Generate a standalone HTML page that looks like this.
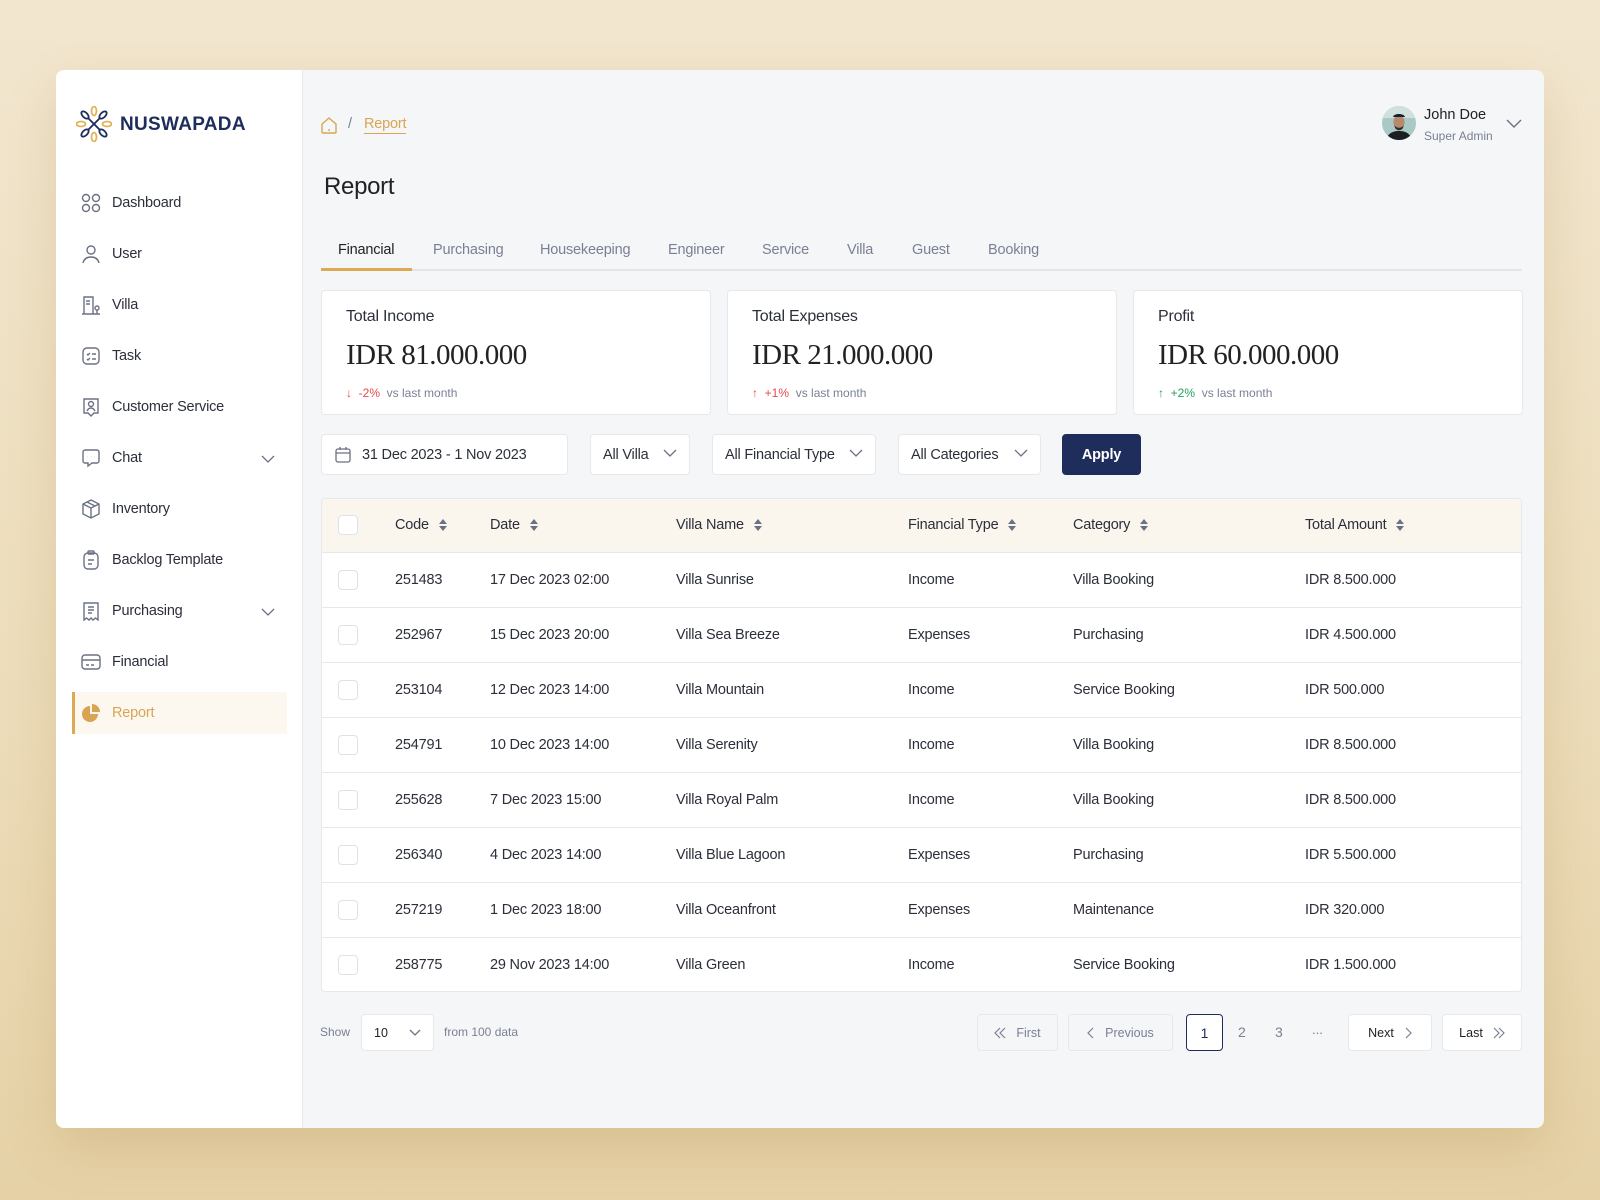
<!DOCTYPE html>
<html><head><meta charset="utf-8"><style>
*{box-sizing:border-box;margin:0;padding:0}
body{width:1600px;height:1200px;overflow:hidden;background:linear-gradient(180deg,#f2e6cf 0%,#ecdcb9 60%,#e6d1a6 100%);font-family:"Liberation Sans",sans-serif;color:#2b2f3a;position:relative}
.a{position:absolute}
.card{left:56px;top:70px;width:1488px;height:1058px;background:#f5f6f8;border-radius:8px;overflow:hidden;box-shadow:0 20px 50px rgba(150,110,40,.18)}
.side{left:0;top:0;width:247px;height:1058px;background:#fff;border-right:1px solid #e7e8ec}
.nav{position:absolute;left:25px;font-size:14.5px;color:#2b2f3a;display:flex;align-items:center;letter-spacing:-.2px}
.nav svg{margin-right:11px}
.t{font-size:14.5px;letter-spacing:-.2px;white-space:nowrap}
.tab{position:absolute;top:172px;font-size:14.5px;color:#7a8093;letter-spacing:-.2px}
.stat{position:absolute;top:220px;width:390px;height:125px;background:#fff;border:1px solid #e6e8ec;border-radius:4px}
.stat .h{position:absolute;left:24px;top:17px;font-size:16px;color:#2b2f3a;letter-spacing:-.2px}
.stat .v{position:absolute;left:24px;top:48px;font-family:"Liberation Serif",serif;font-size:29px;color:#222;letter-spacing:-.5px}
.stat .c{position:absolute;left:24px;top:95px;font-size:12px;color:#7a8093}
.fl{position:absolute;top:364px;height:41px;background:#fff;border:1px solid #e6e8ec;border-radius:4px;font-size:14.5px;display:flex;align-items:center;padding-left:12px;letter-spacing:-.2px}
.chev{position:absolute;right:12px;top:14px}
.tbl{position:absolute;left:265px;top:428px;width:1201px;height:494px;background:#fff;border:1px solid #e6e8ec;border-radius:4px;overflow:hidden}
.row{position:absolute;left:0;width:100%;height:55px;border-top:1px solid #e6e8ec}
.cb{position:absolute;left:16px;top:17px;width:20px;height:20px;border:1px solid #dfe2e8;border-radius:4px;background:#fff}
.row .t{position:absolute;top:19px}
.hd{display:flex;align-items:center;gap:9px}
.pb{position:absolute;top:944px;height:37px;border:1px solid #e6e8ec;border-radius:4px;font-size:12.5px;display:flex;align-items:center;justify-content:center;gap:10px}
</style></head><body>
<svg width="0" height="0" style="position:absolute"><defs><g id="srt"><path d="M1 6L5 1 9 6z M1 8l4 5 4-5z" fill="#6b7185"/></g></defs></svg>
<div class="a card">
 <div class="a side">
  <svg class="a" style="left:20px;top:36px" width="36" height="36" viewBox="0 0 36 36"><g fill="none" stroke-width="1.8"><g stroke="#e2b455"><ellipse cx="18" cy="5" rx="2.5" ry="4.5"/><ellipse cx="18" cy="31" rx="2.5" ry="4.5"/><ellipse cx="5" cy="18" rx="4.5" ry="2.5"/><ellipse cx="31" cy="18" rx="4.5" ry="2.5"/></g><g stroke="#1f2d5c"><ellipse cx="9" cy="9" rx="2.5" ry="4.5" transform="rotate(-45 9 9)"/><ellipse cx="27" cy="9" rx="2.5" ry="4.5" transform="rotate(45 27 9)"/><ellipse cx="9" cy="27" rx="2.5" ry="4.5" transform="rotate(45 9 27)"/><ellipse cx="27" cy="27" rx="2.5" ry="4.5" transform="rotate(-45 27 27)"/><path d="M12 12L24 24M24 12L12 24"/></g></g></svg>
  <div class="a" style="left:64px;top:44px;font-size:19px;font-weight:bold;color:#1f2d5c;letter-spacing:.3px">NUSWAPADA</div>
  <div class="nav" style="top:123px"><svg width="20" height="20" viewBox="0 0 20 20" fill="none" stroke="#6b7185" stroke-width="1.4"><circle cx="5" cy="5" r="3.5"/><circle cx="15" cy="5" r="3.5"/><circle cx="5" cy="15" r="3.5"/><circle cx="15" cy="15" r="3.5"/></svg>Dashboard</div>
  <div class="nav" style="top:174px"><svg width="20" height="20" viewBox="0 0 20 20" fill="none" stroke="#6b7185" stroke-width="1.4"><circle cx="10" cy="6" r="4"/><path d="M2 19c1-4 4-6 8-6s7 2 8 6"/></svg>User</div>
  <div class="nav" style="top:225px"><svg width="20" height="20" viewBox="0 0 20 20" fill="none" stroke="#6b7185" stroke-width="1.4"><path d="M1 19h18M3 19V2h9v17M5 6h4M5 9h4M16 19v-4"/><circle cx="16" cy="13" r="2"/></svg>Villa</div>
  <div class="nav" style="top:276px"><svg width="20" height="20" viewBox="0 0 20 20" fill="none" stroke="#6b7185" stroke-width="1.4"><rect x="2" y="2" width="16" height="16" rx="4"/><path d="M6 8l1 1 2-2M6 13l1 1 2-2M11 8h4M11 13h4"/></svg>Task</div>
  <div class="nav" style="top:327px"><svg width="20" height="20" viewBox="0 0 20 20" fill="none" stroke="#6b7185" stroke-width="1.4"><path d="M3 2h14v14h-4l-3 3-3-3H3z"/><circle cx="10" cy="7" r="2.5"/><path d="M6 14c1-2 2-3 4-3s3 1 4 3"/></svg>Customer Service</div>
  <div class="nav" style="top:378px"><svg width="20" height="20" viewBox="0 0 20 20" fill="none" stroke="#6b7185" stroke-width="1.4"><path d="M2 4a2 2 0 012-2h12a2 2 0 012 2v9a2 2 0 01-2 2h-5l-4 3v-3H4a2 2 0 01-2-2z"/><path d="M6.5 9h.1M10 9h.1M13.5 9h.1" stroke-width="2"/></svg>Chat</div>
  <svg class="a" style="left:205px;top:385px" width="14" height="8" viewBox="0 0 14 8"><path d="M1 1l6 6 6-6" fill="none" stroke="#6b7185" stroke-width="1.3"/></svg>
  <div class="nav" style="top:429px"><svg width="20" height="20" viewBox="0 0 20 20" fill="none" stroke="#6b7185" stroke-width="1.4"><path d="M10 1l8 4v10l-8 4-8-4V5z"/><path d="M2 5l8 4 8-4M10 9v10M6 3l8 4"/></svg>Inventory</div>
  <div class="nav" style="top:480px"><svg width="20" height="20" viewBox="0 0 20 20" fill="none" stroke="#6b7185" stroke-width="1.4"><rect x="3" y="3" width="14" height="16" rx="4"/><rect x="7" y="1" width="6" height="3" rx="1"/><path d="M7 10h6M7 14h4"/></svg>Backlog Template</div>
  <div class="nav" style="top:531px"><svg width="20" height="20" viewBox="0 0 20 20" fill="none" stroke="#6b7185" stroke-width="1.4"><path d="M3 2h14v17l-2.5-2-2.5 2-2-2-2 2-2.5-2L3 19z"/><path d="M7 6h6M7 9h6M7 12h4"/></svg>Purchasing</div>
  <svg class="a" style="left:205px;top:538px" width="14" height="8" viewBox="0 0 14 8"><path d="M1 1l6 6 6-6" fill="none" stroke="#6b7185" stroke-width="1.3"/></svg>
  <div class="nav" style="top:582px"><svg width="20" height="20" viewBox="0 0 20 20" fill="none" stroke="#6b7185" stroke-width="1.4"><rect x="1" y="3" width="18" height="14" rx="3"/><path d="M1 8h18M5 13h3M10 13h3"/></svg>Financial</div>
  <div class="a" style="left:16px;top:622px;width:215px;height:42px;background:#fcf8f0;border-left:3px solid #dcaa55"></div>
  <div class="nav" style="top:633px;color:#d9a552"><svg width="20" height="20" viewBox="0 0 20 20"><path d="M9 3a8 8 0 108 8H9z" fill="#d9a552"/><path d="M11 1a8 8 0 018 8h-8z" fill="#d9a552"/></svg>Report</div>
 </div>
 <svg class="a" style="left:264px;top:46px" width="18" height="18" viewBox="0 0 18 18" fill="none" stroke="#d9a552" stroke-width="1.4"><path d="M2 8l7-6 7 6v8a1 1 0 01-1 1H3a1 1 0 01-1-1z"/><path d="M9 13v2"/></svg>
 <div class="a t" style="left:292px;top:46px;color:#7a8093">/</div>
 <div class="a t" style="left:308px;top:46px;color:#d9a552;border-bottom:1px solid #d9a552;padding-bottom:1px">Report</div>
 <div class="a" style="left:268px;top:103px;font-size:24px;color:#222;letter-spacing:-.3px">Report</div>
 <div class="a" style="left:265px;top:199px;width:1201px;height:2px;background:#e3e5ea"></div>
 <div class="a" style="left:265px;top:198px;width:91px;height:3px;background:#dcaa55"></div>
 <div class="tab" style="left:282px;color:#222">Financial</div>
 <div class="tab" style="left:377px">Purchasing</div>
 <div class="tab" style="left:484px">Housekeeping</div>
 <div class="tab" style="left:612px">Engineer</div>
 <div class="tab" style="left:706px">Service</div>
 <div class="tab" style="left:791px">Villa</div>
 <div class="tab" style="left:856px">Guest</div>
 <div class="tab" style="left:932px">Booking</div>
 <svg class="a" style="left:1326px;top:36px" width="34" height="34" viewBox="0 0 34 34"><defs><clipPath id="cc"><circle cx="17" cy="17" r="17"/></clipPath></defs><g clip-path="url(#cc)"><rect width="34" height="34" fill="#a9c9c6"/><rect y="0" width="34" height="12" fill="#cfe0dd"/><path d="M4 34c2-7 7-9 13-9s11 2 13 9z" fill="#1c1f22"/><ellipse cx="17" cy="16" rx="5.5" ry="7" fill="#b78a6d"/><path d="M11 11c1-4 11-4 12 0z" fill="#17222a"/><path d="M12 18c1 5 9 5 10 0l-1 4c-2 3-6 3-8 0z" fill="#3a2a22"/></g></svg>
 <div class="a" style="left:1368px;top:37px;font-size:14.5px;color:#222">John Doe</div>
 <div class="a" style="left:1368px;top:59px;font-size:12px;color:#7a8093">Super Admin</div>
 <svg class="a" style="left:1450px;top:49px" width="16" height="9" viewBox="0 0 16 9"><path d="M1 1l7 7 7-7" fill="none" stroke="#6b7185" stroke-width="1.4"/></svg>
 <div class="stat" style="left:265px"><div class="h">Total Income</div><div class="v">IDR 81.000.000</div><div class="c"><span style="color:#e5484d">↓ &nbsp;-2%</span> &nbsp;vs last month</div></div>
 <div class="stat" style="left:671px"><div class="h">Total Expenses</div><div class="v">IDR 21.000.000</div><div class="c"><span style="color:#e5484d">↑ &nbsp;+1%</span> &nbsp;vs last month</div></div>
 <div class="stat" style="left:1077px"><div class="h">Profit</div><div class="v">IDR 60.000.000</div><div class="c"><span style="color:#22a45d">↑ &nbsp;+2%</span> &nbsp;vs last month</div></div>
 <div class="fl" style="left:265px;width:247px"><svg width="18" height="18" viewBox="0 0 18 18" fill="none" stroke="#6b7185" stroke-width="1.3" style="margin-right:10px"><rect x="2" y="3" width="14" height="13" rx="2"/><path d="M2 7h14M6 1v3M12 1v3"/></svg>31 Dec 2023 - 1 Nov 2023</div>
 <div class="fl" style="left:534px;width:100px">All Villa<svg class="chev" width="14" height="8" viewBox="0 0 14 8"><path d="M1 1l6 6 6-6" fill="none" stroke="#6b7185" stroke-width="1.3"/></svg></div>
 <div class="fl" style="left:656px;width:164px">All Financial Type<svg class="chev" width="14" height="8" viewBox="0 0 14 8"><path d="M1 1l6 6 6-6" fill="none" stroke="#6b7185" stroke-width="1.3"/></svg></div>
 <div class="fl" style="left:842px;width:143px">All Categories<svg class="chev" width="14" height="8" viewBox="0 0 14 8"><path d="M1 1l6 6 6-6" fill="none" stroke="#6b7185" stroke-width="1.3"/></svg></div>
 <div class="fl" style="left:1006px;width:79px;background:#1f2d5c;border-color:#1f2d5c;color:#fff;padding:0;justify-content:center;font-weight:bold">Apply</div>
 <div class="tbl">
  <div class="a" style="left:0;top:0;width:100%;height:53px;background:#faf6ee"></div>
  <div class="cb" style="top:16px"></div>
  <div class="a t hd" style="left:73px;top:18px">Code<svg width="10" height="14"><use href="#srt"/></svg></div>
  <div class="a t hd" style="left:168px;top:18px">Date<svg width="10" height="14"><use href="#srt"/></svg></div>
  <div class="a t hd" style="left:354px;top:18px">Villa Name<svg width="10" height="14"><use href="#srt"/></svg></div>
  <div class="a t hd" style="left:586px;top:18px">Financial Type<svg width="10" height="14"><use href="#srt"/></svg></div>
  <div class="a t hd" style="left:751px;top:18px">Category<svg width="10" height="14"><use href="#srt"/></svg></div>
  <div class="a t hd" style="left:983px;top:18px">Total Amount<svg width="10" height="14"><use href="#srt"/></svg></div>
  <div class="row" style="top:53px"><div class="cb"></div><div class="t" style="left:73px">251483</div><div class="t" style="left:168px">17 Dec 2023 02:00</div><div class="t" style="left:354px">Villa Sunrise</div><div class="t" style="left:586px">Income</div><div class="t" style="left:751px">Villa Booking</div><div class="t" style="left:983px">IDR 8.500.000</div></div>
  <div class="row" style="top:108px"><div class="cb"></div><div class="t" style="left:73px">252967</div><div class="t" style="left:168px">15 Dec 2023 20:00</div><div class="t" style="left:354px">Villa Sea Breeze</div><div class="t" style="left:586px">Expenses</div><div class="t" style="left:751px">Purchasing</div><div class="t" style="left:983px">IDR 4.500.000</div></div>
  <div class="row" style="top:163px"><div class="cb"></div><div class="t" style="left:73px">253104</div><div class="t" style="left:168px">12 Dec 2023 14:00</div><div class="t" style="left:354px">Villa Mountain</div><div class="t" style="left:586px">Income</div><div class="t" style="left:751px">Service Booking</div><div class="t" style="left:983px">IDR 500.000</div></div>
  <div class="row" style="top:218px"><div class="cb"></div><div class="t" style="left:73px">254791</div><div class="t" style="left:168px">10 Dec 2023 14:00</div><div class="t" style="left:354px">Villa Serenity</div><div class="t" style="left:586px">Income</div><div class="t" style="left:751px">Villa Booking</div><div class="t" style="left:983px">IDR 8.500.000</div></div>
  <div class="row" style="top:273px"><div class="cb"></div><div class="t" style="left:73px">255628</div><div class="t" style="left:168px">7 Dec 2023 15:00</div><div class="t" style="left:354px">Villa Royal Palm</div><div class="t" style="left:586px">Income</div><div class="t" style="left:751px">Villa Booking</div><div class="t" style="left:983px">IDR 8.500.000</div></div>
  <div class="row" style="top:328px"><div class="cb"></div><div class="t" style="left:73px">256340</div><div class="t" style="left:168px">4 Dec 2023 14:00</div><div class="t" style="left:354px">Villa Blue Lagoon</div><div class="t" style="left:586px">Expenses</div><div class="t" style="left:751px">Purchasing</div><div class="t" style="left:983px">IDR 5.500.000</div></div>
  <div class="row" style="top:383px"><div class="cb"></div><div class="t" style="left:73px">257219</div><div class="t" style="left:168px">1 Dec 2023 18:00</div><div class="t" style="left:354px">Villa Oceanfront</div><div class="t" style="left:586px">Expenses</div><div class="t" style="left:751px">Maintenance</div><div class="t" style="left:983px">IDR 320.000</div></div>
  <div class="row" style="top:438px"><div class="cb"></div><div class="t" style="left:73px">258775</div><div class="t" style="left:168px">29 Nov 2023 14:00</div><div class="t" style="left:354px">Villa Green</div><div class="t" style="left:586px">Income</div><div class="t" style="left:751px">Service Booking</div><div class="t" style="left:983px">IDR 1.500.000</div></div>
 </div>
 <div class="a" style="left:264px;top:955px;font-size:12px;color:#7a8093">Show</div>
 <div class="pb" style="left:305px;width:73px;background:#fff;justify-content:flex-start;padding-left:12px;color:#222">10<svg style="position:absolute;right:12px;top:14px" width="12" height="7" viewBox="0 0 12 7"><path d="M1 1l5 5 5-5" fill="none" stroke="#6b7185" stroke-width="1.3"/></svg></div>
 <div class="a" style="left:388px;top:955px;font-size:12px;color:#7a8093">from 100 data</div>
 <div class="pb" style="left:921px;width:81px;color:#7a8093"><svg width="12" height="12" viewBox="0 0 12 12" fill="none" stroke="#7a8093" stroke-width="1.2"><path d="M6 1L1 6l5 5M11 1L6 6l5 5"/></svg>First</div>
 <div class="pb" style="left:1012px;width:105px;color:#7a8093"><svg width="8" height="12" viewBox="0 0 8 12" fill="none" stroke="#7a8093" stroke-width="1.2"><path d="M6 1L1 6l5 5"/></svg>Previous</div>
 <div class="pb" style="left:1130px;width:37px;border-color:#1f2d5c;background:#fff;color:#1f2d5c;font-size:14px">1</div>
 <div class="a" style="left:1182px;top:954px;font-size:14px;color:#7a8093">2</div>
 <div class="a" style="left:1219px;top:954px;font-size:14px;color:#7a8093">3</div>
 <div class="a" style="left:1256px;top:952px;font-size:13px;color:#7a8093">...</div>
 <div class="pb" style="left:1292px;width:84px;background:#fff;color:#222">Next<svg width="8" height="12" viewBox="0 0 8 12" fill="none" stroke="#7a8093" stroke-width="1.2"><path d="M2 1l5 5-5 5"/></svg></div>
 <div class="pb" style="left:1386px;width:80px;background:#fff;color:#222">Last<svg width="12" height="12" viewBox="0 0 12 12" fill="none" stroke="#7a8093" stroke-width="1.2"><path d="M1 1l5 5-5 5M6 1l5 5-5 5"/></svg></div>
</div>
</body></html>
